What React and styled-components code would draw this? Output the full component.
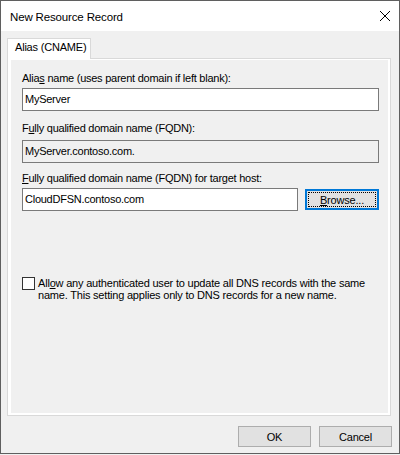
import styled, { createGlobalStyle } from "styled-components";

const GlobalStyle = createGlobalStyle`
  html, body {
    margin: 0;
    padding: 0;
    background: #f0f0f0;
  }
  body {
    font-family: "Liberation Sans", Arial, sans-serif;
    font-size: 11px;
    letter-spacing: -0.25px;
    color: #000;
  }
`;

const Window = styled.div`
  width: 400px;
  box-sizing: border-box;
  border: 1px solid #5f5f5f;
  background: #f0f0f0;
  display: flex;
  flex-direction: column;
`;

const TitleBar = styled.div`
  height: 30px;
  background: #fff;
  display: flex;
  align-items: center;
  justify-content: space-between;
`;

const Title = styled.div`
  padding-left: 9px;
  padding-top: 1px;
  font-size: 11.5px;
  letter-spacing: -0.15px;
`;

const CloseButton = styled.div`
  width: 29px;
  height: 30px;
  display: flex;
  align-items: center;
  justify-content: center;
`;

const Body = styled.div`
  padding: 7px 7px 6px 6px;
  display: flex;
  flex-direction: column;
`;

const TabRow = styled.div`
  width: 384px;
  height: 21px;
  display: flex;
`;

const Tab = styled.div`
  box-sizing: border-box;
  height: 21px;
  width: 84px;
  padding: 0 0 0 7px;
  border: 1px solid #d9d9d9;
  border-bottom: none;
  background: #fff;
  line-height: 17px;
  letter-spacing: -0.2px;
  white-space: nowrap;
`;

const TabFill = styled.div`
  flex: 1;
  border-bottom: 1px solid #d9d9d9;
`;

const Panel = styled.div`
  width: 384px;
  box-sizing: border-box;
  border: 1px solid #d9d9d9;
  border-top: none;
  background: #fff;
  padding: 1px 2px 2px 3px;
`;

const Page = styled.div`
  height: 353px;
  box-sizing: border-box;
  background: #f0f0f0;
  padding: 12px 0 0 11px;
  display: flex;
  flex-direction: column;
`;

const Label = styled.div`
  line-height: 13px;
  margin-top: ${(p) => p.$gap || 0}px;
`;

const TextBox = styled.input`
  display: block;
  width: ${(p) => p.$width}px;
  height: 23px;
  box-sizing: border-box;
  margin: ${(p) => p.$gap || 0}px 0 0 0;
  padding: 0 2px 2px;
  border: 1px solid #7a7a7a;
  background: ${(p) => (p.readOnly && p.$disabled ? "#f0f0f0" : "#fff")};
  font: 11px "Liberation Sans", Arial, sans-serif;
  letter-spacing: -0.25px;
  color: #000;
  outline: none;
`;

const Row = styled.div`
  display: flex;
  align-items: flex-start;
  margin-top: 3px;
`;

const Button = styled.button`
  width: ${(p) => p.$width || 73}px;
  height: 21px;
  box-sizing: border-box;
  margin: 0;
  padding: 0;
  background: #e1e1e1;
  border: 1px solid #adadad;
  font: 11px "Liberation Sans", Arial, sans-serif;
  letter-spacing: -0.2px;
  color: #000;
`;

const BrowseButton = styled(Button)`
  margin-left: 7px;
  margin-top: 1px;
  border: 2px solid #0078d7;
  outline: 1px dotted #000;
  outline-offset: -4px;
`;

const CheckRow = styled.div`
  display: flex;
  align-items: flex-start;
  margin-top: 66px;
`;

const CheckBox = styled.div`
  width: 13px;
  height: 13px;
  box-sizing: border-box;
  border: 1px solid #333;
  background: #fff;
  flex: none;
`;

const CheckText = styled.div`
  margin-left: 3px;
  line-height: 12px;
  letter-spacing: -0.2px;
`;

const Footer = styled.div`
  display: flex;
  justify-content: flex-end;
  gap: 8px;
  margin-top: 10px;
`;

export default function App() {
  return (
    <>
      <GlobalStyle />
      <Window>
        <TitleBar>
          <Title>New Resource Record</Title>
          <CloseButton>
            <svg width="10" height="10" viewBox="0 0 10 10">
              <path d="M0 0L10 10M10 0L0 10" stroke="#000" strokeWidth="1" fill="none" />
            </svg>
          </CloseButton>
        </TitleBar>
        <Body>
          <TabRow>
            <Tab>Alias (CNAME)</Tab>
            <TabFill />
          </TabRow>
          <Panel>
            <Page>
              <Label>
                Alia<u>s</u> name (uses parent domain if left blank):
              </Label>
              <TextBox $width={357} $gap={3} defaultValue="MyServer" />
              <Label $gap={11}>
                F<u>u</u>lly qualified domain name (FQDN):
              </Label>
              <TextBox
                $width={357}
                $gap={5}
                $disabled
                readOnly
                defaultValue="MyServer.contoso.com."
              />
              <Label $gap={9}>
                <u>F</u>ully qualified domain name (FQDN) for target host:
              </Label>
              <Row>
                <TextBox $width={276} defaultValue="CloudDFSN.contoso.com" />
                <BrowseButton $width={74}>
                  <u>B</u>rowse...
                </BrowseButton>
              </Row>
              <CheckRow>
                <CheckBox />
                <CheckText>
                  All<u>o</u>w any authenticated user to update all DNS records with the same
                  <br />
                  name. This setting applies only to DNS records for a new name.
                </CheckText>
              </CheckRow>
            </Page>
          </Panel>
          <Footer>
            <Button>OK</Button>
            <Button>Cancel</Button>
          </Footer>
        </Body>
      </Window>
    </>
  );
}
